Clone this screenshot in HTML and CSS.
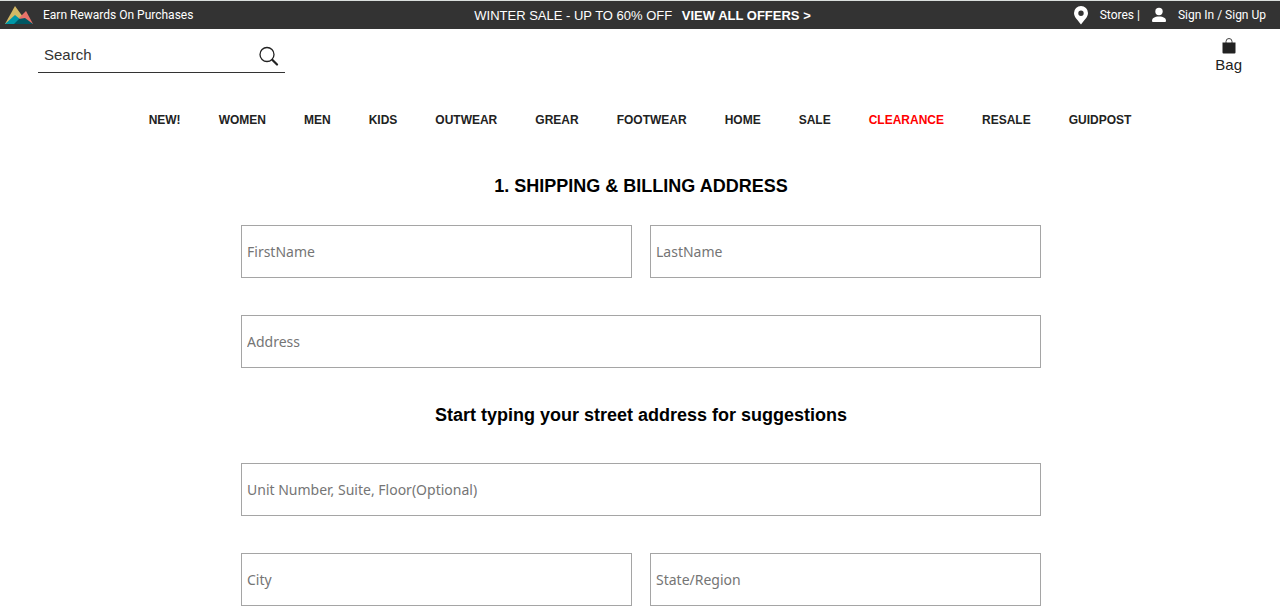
FILE: index.html
```html
<!DOCTYPE html>
<html lang="en">
<head>
<meta charset="utf-8">
<meta name="viewport" content="width=device-width, initial-scale=1">
<title>Shipping &amp; Billing Address</title>
<link rel="stylesheet" href="styles.css">
</head>
<body>
<header>
  <div class="topbar">
    <a class="rewards" href="#">
      <svg class="logo" viewBox="0 0 28 19" aria-hidden="true">
        <path d="M0 18 10 0 18 11 14 18Z" fill="#d4b965"/>
        <path d="M14 12 21 5 28 18H15Z" fill="#e8736a"/>
        <path d="M0 18 10 9 16 14 13 18Z" fill="#0097a7"/>
        <path d="M9 18 14 13 20 12 28 18Z" fill="#005662"/>
      </svg>
      <span>Earn Rewards On Purchases</span>
    </a>
    <p class="promo">WINTER SALE - UP TO 60% OFF <a class="offers" href="#">VIEW ALL OFFERS &gt;</a></p>
    <div class="account">
      <a class="account-link" href="#">
        <svg class="pin" viewBox="0 0 16 20" aria-hidden="true"><path fill="#fff" fill-rule="evenodd" d="M8 1a7 7 0 0 1 7 7c0 4.500-4 7-7 11.500C5 15 1 12.500 1 8a7 7 0 0 1 7-7Zm0 4.500a2.700 2.700 0 1 0 0 5.400 2.700 2.700 0 0 0 0-5.400Z"/></svg>
        <span>Stores |</span>
      </a>
      <a class="account-link" href="#">
        <svg class="person" viewBox="0 0 16 16" aria-hidden="true"><circle cx="8" cy="4.500" r="3.700" fill="#fff"/><path fill="#fff" d="M1 14c0-3 2.500-4.500 7-4.500s7 1.500 7 4.500q0 1-1 1H2q-1 0-1-1Z"/></svg>
        <span>Sign In / Sign Up</span>
      </a>
    </div>
  </div>
  <div class="tools">
    <form class="search" role="search">
      <input class="search-input" type="search" placeholder="Search" aria-label="Search">
      <button class="search-button" type="button" aria-label="Submit search">
        <svg class="search-icon" viewBox="0 0 20 20" fill="none" stroke="#222" aria-hidden="true"><circle cx="8" cy="8.500" r="7" stroke-width="1.300"/><path d="m13.500 14 4.500 4.500" stroke-width="2.200" stroke-linecap="round"/></svg>
      </button>
    </form>
    <a class="bag" href="#">
      <svg class="bag-icon" viewBox="0 0 14 16" aria-hidden="true"><path fill="none" stroke="#444" d="M4 5V3.500a3 3 0 0 1 6 0V5"/><path fill="#222" d="M.500 4.500h13v10a1 1 0 0 1-1 1h-11a1 1 0 0 1-1-1Z"/></svg>
      <span>Bag</span>
    </a>
  </div>
  <nav class="nav" aria-label="Departments">
    <a href="#">NEW!</a>
    <a href="#">WOMEN</a>
    <a href="#">MEN</a>
    <a href="#">KIDS</a>
    <a href="#">OUTWEAR</a>
    <a href="#">GREAR</a>
    <a href="#">FOOTWEAR</a>
    <a href="#">HOME</a>
    <a href="#">SALE</a>
    <a class="clearance" href="#">CLEARANCE</a>
    <a href="#">RESALE</a>
    <a href="#">GUIDPOST</a>
  </nav>
</header>
<main class="main">
  <form class="address">
    <h1 class="heading">1. SHIPPING &amp; BILLING ADDRESS</h1>
    <div class="fields">
      <input class="field" type="text" placeholder="FirstName" aria-label="FirstName">
      <input class="field" type="text" placeholder="LastName" aria-label="LastName">
      <input class="field wide" type="text" placeholder="Address" aria-label="Address">
    </div>
    <h2 class="heading hint">Start typing your street address for suggestions</h2>
    <div class="fields">
      <input class="field wide" type="text" placeholder="Unit Number, Suite, Floor(Optional)" aria-label="Unit Number, Suite, Floor(Optional)">
      <input class="field" type="text" placeholder="City" aria-label="City">
      <input class="field" type="text" placeholder="State/Region" aria-label="State/Region">
    </div>
  </form>
</main>
</body>
</html>
```

FILE: styles.css
```css
* {
  box-sizing: border-box;
}

body {
  margin: 0;
  background: #fff;
  color: #222;
  font-family: "Liberation Sans", Arial, sans-serif;
}

a {
  color: inherit;
  text-decoration: none;
}

svg {
  display: block;
  flex: none;
}

.topbar {
  display: grid;
  grid-template-columns: 1fr auto 1fr;
  align-items: center;
  height: 29px;
  padding: 0 14px 0 5px;
  border-top: 1px solid #dadfdd;
  background: #333;
  color: #fff;
  font: 12px Roboto, "Liberation Sans", sans-serif;
}

.rewards,
.account,
.account-link {
  display: flex;
  align-items: center;
}

.rewards {
  gap: 10px;
}

.logo {
  width: 28px;
  height: 19px;
}

.promo {
  margin: 0 0 0 14px;
  font: 13px "Liberation Sans", Arial, sans-serif;
}

.offers {
  margin-left: 6px;
  font-weight: 700;
}

.account {
  justify-content: flex-end;
  gap: 11px;
}

.account-link {
  gap: 11px;
}

.pin {
  width: 16px;
  height: 20px;
}

.person {
  width: 16px;
  height: 16px;
}

.tools {
  display: flex;
  justify-content: space-between;
  align-items: flex-start;
  padding: 8px 38px 0;
}

.search {
  display: flex;
  align-items: center;
  width: 247px;
  height: 36px;
  border-bottom: 1px solid #333;
}

.search-input {
  flex: 1;
  min-width: 0;
  padding: 0 6px;
  border: 0;
  background: transparent;
  color: #222;
  font: 15px "Liberation Sans", Arial, sans-serif;
  outline: none;
}

.search-input::placeholder {
  color: #333;
  opacity: 1;
}

.search-button {
  padding: 2px 6px 0;
  border: 0;
  background: transparent;
}

.search-icon {
  width: 20px;
  height: 20px;
}

.bag {
  display: flex;
  flex-direction: column;
  align-items: center;
  gap: 2px;
  padding-top: 1px;
  font-size: 15px;
  line-height: 18px;
}

.bag-icon {
  width: 14px;
  height: 16px;
}

.nav {
  display: flex;
  flex-wrap: wrap;
  justify-content: center;
  gap: 12px 38px;
  padding: 39px 16px 0;
  font-size: 12px;
  font-weight: 700;
  line-height: 15px;
}

.clearance {
  color: #f00;
}

.main {
  padding-left: 2px;
}

.address {
  max-width: 800px;
  margin: 0 auto;
  padding-top: 48px;
}

.heading {
  margin: 0 0 28px;
  color: #000;
  font-size: 18px;
  font-weight: 700;
  line-height: 21px;
  text-align: center;
}

.hint {
  margin: 37px 0;
}

.fields {
  display: grid;
  grid-template-columns: 1fr 1fr;
  gap: 37px 18px;
}

.field {
  width: 100%;
  min-width: 0;
  height: 53px;
  padding: 0 5px 1px;
  border: 1px solid #a5a5a5;
  background: #fff;
  color: #222;
  font: 14px "Noto Sans", Verdana, sans-serif;
}

.field::placeholder {
  color: #757575;
  opacity: 1;
}

.wide {
  grid-column: 1 / -1;
}
```
